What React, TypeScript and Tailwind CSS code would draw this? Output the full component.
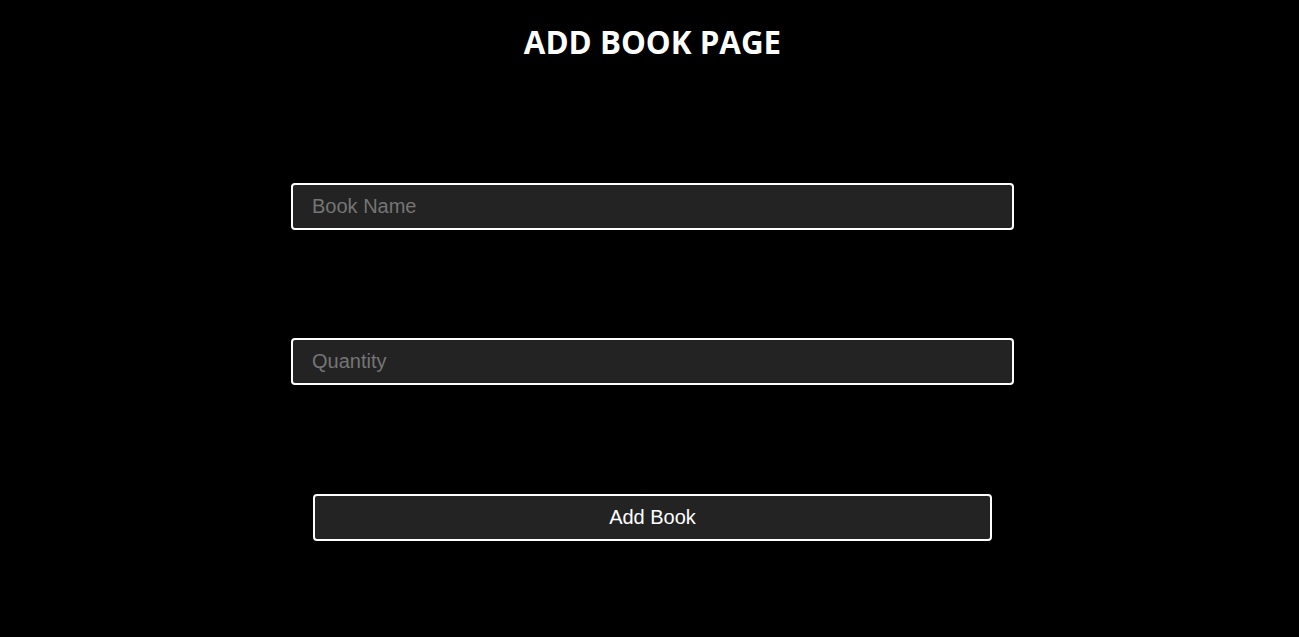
import React from "react";

export default function App() {
  return (
    <div className="min-h-[637px] w-full bg-black flex flex-col items-center pl-[6px]" style={{ fontFamily: "'Liberation Sans', Arial, sans-serif" }}>
      <h1 className="mt-[22px] text-[31.3px] font-bold leading-[40px] text-white" style={{ fontFamily: "'Open Sans', 'Noto Sans', sans-serif" }}>
        ADD BOOK PAGE
      </h1>
      <input
        placeholder="Book Name"
        className="mt-[121px] w-[723px] h-[47px] rounded-[4px] border-2 border-white bg-[#232323] pl-[19px] pr-[20px] text-[20px] text-white placeholder:text-[#757575] outline-none"
      />
      <input
        placeholder="Quantity"
        className="mt-[108px] w-[723px] h-[47px] rounded-[4px] border-2 border-white bg-[#232323] pl-[19px] pr-[20px] text-[20px] text-white placeholder:text-[#757575] outline-none"
      />
      <button className="mt-[109px] w-[679px] h-[47px] rounded-[4px] border-2 border-white bg-[#232323] pb-[2px] text-[20px] text-white">
        Add Book
      </button>
    </div>
  );
}
